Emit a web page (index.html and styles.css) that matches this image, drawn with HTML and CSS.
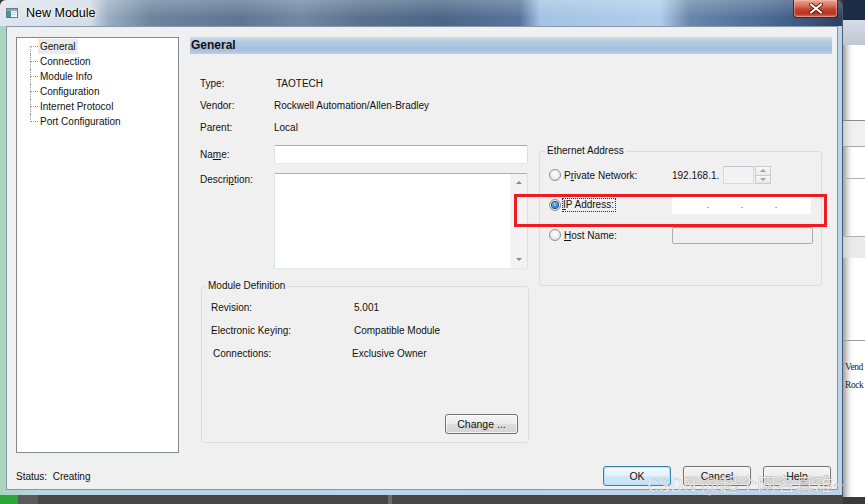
FILE: index.html
```html
<!DOCTYPE html>
<html>
<head>
<meta charset="utf-8">
<title>New Module</title>
<link rel="stylesheet" href="styles.css">
</head>
<body>
<div class="screen">
  <div class="main-col">
    <div class="window">
      <div class="titlebar">
        <svg class="app-icon" width="12" height="10" viewBox="0 0 12 10">
          <rect x="0.5" y="0.5" width="11" height="9" fill="#f4f6f8" stroke="#6d7c8c"/>
          <rect x="1" y="1" width="10" height="2" fill="#8aa4c0"/>
          <rect x="1" y="3" width="4" height="6" fill="#3e9a9a"/>
          <rect x="5.5" y="4" width="5" height="1" fill="#c8d2dc"/>
          <rect x="5.5" y="6" width="5" height="1" fill="#c8d2dc"/>
        </svg>
        <span class="title">New Module</span>
        <div class="close-btn">
          <svg width="14" height="11" viewBox="0 0 14 11">
            <path d="M2 1.5 L12 9.5 M12 1.5 L2 9.5" stroke="#5a1b14" stroke-width="4" stroke-linecap="round"/>
            <path d="M2 1.5 L12 9.5 M12 1.5 L2 9.5" stroke="#ffffff" stroke-width="2.2" stroke-linecap="round"/>
          </svg>
        </div>
      </div>
      <div class="frame-body">
        <div class="client">
          <div class="content-row">
            <div class="tree">
              <ul class="tree-list">
                <li class="ti first"><span class="twig"><span class="tw-top"></span><span class="tw-bot"></span></span><span class="ti-text sel">General</span></li>
                <li class="ti"><span class="twig"><span class="tw-top"></span><span class="tw-bot"></span></span><span class="ti-text">Connection</span></li>
                <li class="ti"><span class="twig"><span class="tw-top"></span><span class="tw-bot"></span></span><span class="ti-text">Module Info</span></li>
                <li class="ti"><span class="twig"><span class="tw-top"></span><span class="tw-bot"></span></span><span class="ti-text">Configuration</span></li>
                <li class="ti"><span class="twig"><span class="tw-top"></span><span class="tw-bot"></span></span><span class="ti-text">Internet Protocol</span></li>
                <li class="ti last"><span class="twig"><span class="tw-top"></span><span class="tw-bot"></span></span><span class="ti-text">Port Configuration</span></li>
              </ul>
            </div>
            <div class="panel">
              <div class="panel-header">General</div>
              <div class="panel-body">
                <div class="form-col">
                  <div class="info-row first-info"><span class="lbl">Type:</span><span class="val val-type">TAOTECH</span></div>
                  <div class="info-row"><span class="lbl">Vendor:</span><span class="val">Rockwell Automation/Allen-Bradley</span></div>
                  <div class="info-row"><span class="lbl">Parent:</span><span class="val">Local</span></div>
                  <div class="field-row name-row"><span class="lbl">Na<u>m</u>e:</span><div class="textbox name-box"></div></div>
                  <div class="field-row desc-row"><span class="lbl desc-lbl">Descri<u>p</u>tion:</span>
                    <div class="textbox desc-box">
                      <div class="desc-text"></div>
                      <div class="vscroll">
                        <span class="arrow-up"></span>
                        <span class="arrow-down"></span>
                      </div>
                    </div>
                  </div>
                  <fieldset class="group moddef">
                    <legend>Module Definition</legend>
                    <div class="moddef-inner">
                      <div class="md-row"><span class="md-lbl">Revision:</span><span class="md-val">5.001</span></div>
                      <div class="md-row"><span class="md-lbl">Electronic Keying:</span><span class="md-val">Compatible Module</span></div>
                      <div class="md-row md-conn"><span class="md-lbl">Connections:</span><span class="md-val">Exclusive Owner</span></div>
                      <button class="btn btn-change">Change ...</button>
                    </div>
                  </fieldset>
                </div>
                <div class="eth-col">
                  <fieldset class="group eth">
                    <legend>Ethernet Address</legend>
                    <div class="eth-inner">
                      <div class="eth-row">
                        <div class="eth-opt"><span class="radio"></span><span>P<u>r</u>ivate Network:</span></div>
                        <div class="eth-ctl">
                          <span class="ip-prefix">192.168.1.</span>
                          <span class="spin-box"></span>
                          <span class="spinner"><span class="sp-btn"><span class="tri-up"></span></span><span class="sp-btn"><span class="tri-down"></span></span></span>
                        </div>
                      </div>
                      <div class="eth-row">
                        <div class="eth-opt"><span class="radio checked"></span><span class="focus-rect"><u>I</u>P Address:</span></div>
                        <div class="eth-ctl">
                          <div class="ip-box">
                            <span class="ip-seg seg-first"></span><span class="ip-dot">.</span><span class="ip-seg"></span><span class="ip-dot">.</span><span class="ip-seg"></span><span class="ip-dot">.</span><span class="ip-seg seg-last"></span>
                          </div>
                        </div>
                      </div>
                      <div class="eth-row">
                        <div class="eth-opt"><span class="radio"></span><span><u>H</u>ost Name:</span></div>
                        <div class="eth-ctl"><div class="host-box"></div></div>
                      </div>
                    </div>
                  </fieldset>
                </div>
              </div>
            </div>
          </div>
          <div class="footer">
            <div class="status">Status:&nbsp; Creating</div>
            <div class="buttons">
              <button class="btn btn-default">OK</button>
              <button class="btn">Cancel</button>
              <button class="btn">Help</button>
            </div>
          </div>
        </div>
      </div>
    </div>
    <div class="desktop"></div>
  </div>
  <div class="bgapp">
    <div class="ba-dark"></div>
    <div class="ba-head"></div>
    <div class="ba-s1"></div>
    <div class="ba-s2"></div>
    <div class="ba-s3"></div>
    <div class="ba-s4"></div>
    <div class="ba-s5"></div>
    <div class="ba-s6"></div>
    <div class="ba-s7"><div class="ba-text">Vend</div><div class="ba-text">Rock</div></div>
    <div class="ba-bottom"></div>
  </div>
  <div class="red-box"></div>
  <div class="watermark">CSDN @起个网名真难~</div>
</div>
</body>
</html>
```

FILE: styles.css
```css
html, body {
  margin: 0;
  padding: 0;
  background: #3a3a3a;
}
body {
  font-family: "Liberation Sans", Arial, sans-serif;
  font-size: 10px;
  color: #111;
}
.screen {
  position: relative;
  width: 865px;
  height: 504px;
  overflow: hidden;
  display: flex;
}
.main-col {
  width: 843px;
  display: flex;
  flex-direction: column;
}
.window {
  height: 495px;
  display: flex;
  flex-direction: column;
  border-right: 1px solid #4d5b6e;
  border-radius: 6px 6px 0 0;
  overflow: hidden;
}

/* title bar */
.titlebar {
  height: 26px;
  flex: none;
  display: flex;
  align-items: flex-start;
  background:
    linear-gradient(180deg, rgba(255,255,255,0.22), rgba(255,255,255,0) 70%),
    linear-gradient(90deg, #dfe6ee 0px, #d3dde7 90px, #9aaec2 108px, #6e849e 150px, #5e7694 240px, #7088a2 300px, #5a728f 360px, #4c6586 440px, #58749a 520px, #a4c2e3 540px, #b0cdeb 660px, #6886a9 690px, #4e6d95 760px, #3e5a80 800px, #2b3f5e 842px);
}
.app-icon {
  margin: 8px 0 0 6px;
  flex: none;
}
.title {
  margin-left: 8px;
  line-height: 26px;
  font-size: 12.5px;
  color: #000;
  text-shadow: 0 0 6px rgba(255,255,255,0.95), 0 0 3px rgba(255,255,255,0.9);
}
.close-btn {
  margin-left: auto;
  margin-right: 4px;
  width: 45px;
  height: 18px;
  box-sizing: border-box;
  border: 1px solid #5b1d16;
  border-top: none;
  border-radius: 0 0 4px 4px;
  background: linear-gradient(180deg, #e9a895 0%, #d8705c 35%, #c4412b 55%, #b83620 80%, #d1705b 100%);
  box-shadow: inset 0 0 0 1px rgba(255,200,190,0.45);
  display: flex;
  align-items: center;
  justify-content: center;
}

/* frame */
.frame-body {
  flex: 1;
  display: flex;
  padding: 0 4px 5px 6px;
  background: linear-gradient(90deg, #a9d4c0 0px, #b8d6e6 40px, #bcd5ee 100%);
}
.client {
  flex: 1;
  display: flex;
  flex-direction: column;
  border: 1px solid #8797ab;
  background: #f0f0f0;
}
.content-row {
  display: flex;
  padding: 10px 5px 0 9px;
  height: 426px;
  box-sizing: border-box;
}

/* tree */
.tree {
  width: 163px;
  height: 416px;
  box-sizing: border-box;
  border: 1px solid #828790;
  background: #fff;
  flex: none;
}
.tree-list {
  list-style: none;
  margin: 0;
  padding: 1px 0 0 13px;
}
.ti {
  display: flex;
  height: 15px;
}
.twig {
  display: flex;
  flex-direction: column;
  width: 8px;
  flex: none;
}
.tw-top {
  height: 7px;
  border-left: 1px dotted #9c9c9c;
  border-bottom: 1px dotted #9c9c9c;
}
.tw-bot {
  flex: 1;
  border-left: 1px dotted #9c9c9c;
}
.first .tw-top { border-left-color: transparent; }
.last .tw-bot { border-left-color: transparent; }
.ti-text {
  line-height: 15px;
  padding: 0 2px;
  font-size: 10px;
  white-space: nowrap;
}
.ti-text.sel {
  background: #ebebeb;
}

/* panel */
.panel {
  margin-left: 11px;
  flex: 1;
  display: flex;
  flex-direction: column;
}
.panel-header {
  height: 17px;
  line-height: 17px;
  padding-left: 1px;
  font-size: 12px;
  font-weight: bold;
  color: #111;
  background: linear-gradient(180deg, #cddcec 0%, #b1c8e1 35%, #a6bfdb 75%, #bcd0e6 100%);
}
.panel-body {
  display: flex;
  flex: 1;
}
.form-col {
  width: 340px;
  padding-left: 10px;
  box-sizing: border-box;
  flex: none;
}
.info-row {
  display: flex;
  height: 22px;
  align-items: center;
}
.first-info { margin-top: 18px; }
.lbl {
  width: 74px;
  flex: none;
}
.val-type { padding-left: 2px; }
.field-row {
  display: flex;
}
.name-row {
  margin-top: 7px;
  align-items: center;
}
.desc-row {
  margin-top: 9px;
}
.desc-lbl {
  line-height: 14px;
}
.textbox {
  box-sizing: border-box;
  width: 254px;
  border: 1px solid;
  border-color: #abadb3 #dbdfe6 #e3e9ef #e2e3ea;
  border-radius: 2px;
  background: #fff;
}
.name-box { height: 19px; }
.desc-box {
  height: 96px;
  display: flex;
}
.desc-text { flex: 1; }
.vscroll {
  width: 16px;
  background: #f3f3f3;
  border-left: 1px solid #f7f7f7;
  display: flex;
  flex-direction: column;
  justify-content: space-between;
  align-items: center;
  padding: 7px 0 7px;
}
.arrow-up {
  width: 0; height: 0;
  border-left: 3px solid transparent;
  border-right: 3px solid transparent;
  border-bottom: 3px solid #8a8a8a;
}
.arrow-down {
  width: 0; height: 0;
  border-left: 3px solid transparent;
  border-right: 3px solid transparent;
  border-top: 3px solid #8a8a8a;
}

/* group boxes */
.group {
  margin: 0;
  padding: 0;
  border: 1px solid #d8dfe4;
  border-radius: 3px;
  min-width: 0;
  box-sizing: border-box;
}
.group legend {
  padding: 0 2px;
  line-height: 14px;
  font-size: 10px;
}
.moddef {
  margin: 10px 0 0 1px;
  width: 328px;
  height: 164px;
}
.moddef legend { margin-left: 4px; }
.moddef-inner {
  height: 149px;
  box-sizing: border-box;
  padding: 3px 10px 8px 9px;
  display: flex;
  flex-direction: column;
}
.md-row {
  display: flex;
  height: 23px;
  align-items: center;
}
.md-lbl {
  width: 143px;
  flex: none;
}
.md-conn .md-lbl { padding-left: 2px; width: 141px; }
.md-conn .md-val { margin-left: -2px; }
.btn-change {
  margin-top: auto;
  align-self: flex-end;
  width: 73px !important;
}

.eth-col {
  margin-left: 9px;
  width: 283px;
  flex: none;
}
.eth {
  margin-top: 90px;
  width: 283px;
  height: 142px;
}
.eth legend { margin-left: 5px; }
.eth-inner {
  padding: 2px 0 0 9px;
}
.eth-row {
  display: grid;
  grid-template-columns: 123px 1fr;
  height: 30px;
  align-items: center;
}
.eth-opt {
  display: flex;
  align-items: center;
  white-space: nowrap;
}
.radio {
  width: 12px;
  height: 12px;
  box-sizing: border-box;
  border-radius: 50%;
  border: 1px solid #8e9195;
  background: radial-gradient(circle at 50% 40%, #ffffff 0%, #ececec 55%, #cfcfcf 100%);
  margin-right: 3px;
  flex: none;
  display: flex;
  align-items: center;
  justify-content: center;
}
.radio.checked::after {
  content: "";
  width: 6px;
  height: 6px;
  border-radius: 50%;
  background: radial-gradient(circle at 45% 40%, #9fd8fb 0%, #3a8ad6 50%, #1b4f8e 100%);
  box-shadow: 0 0 0 1px #24507f;
}
.focus-rect {
  outline: 1px dotted #333;
  outline-offset: 0;
  padding: 0 1px 0 0;
  margin-left: -1px;
  line-height: 12px;
}
.eth-ctl {
  display: flex;
  align-items: center;
}
.ip-prefix {
  width: 51px;
  flex: none;
}
.spin-box {
  width: 31px;
  height: 18px;
  box-sizing: border-box;
  border: 1px solid #d5d8dc;
  border-top-color: #c2c5ca;
  background: #f3f3f3;
}
.spinner {
  margin-left: 1px;
  width: 16px;
  height: 18px;
  display: flex;
  flex-direction: column;
}
.sp-btn {
  flex: 1;
  box-sizing: border-box;
  border: 1px solid #c9cbce;
  background: linear-gradient(#f8f8f8, #e9e9e9);
  display: flex;
  align-items: center;
  justify-content: center;
}
.sp-btn + .sp-btn { border-top: none; }
.tri-up {
  border-left: 3px solid transparent;
  border-right: 3px solid transparent;
  border-bottom: 3px solid #a0a0a0;
}
.tri-down {
  border-left: 3px solid transparent;
  border-right: 3px solid transparent;
  border-top: 3px solid #a0a0a0;
}
.ip-box {
  width: 139px;
  height: 17px;
  background: #fff;
  display: flex;
  align-items: center;
  font-size: 9px;
  color: #555;
}
.ip-seg { width: 30px; flex: none; }
.ip-seg.seg-first { width: 34px; }
.ip-seg.seg-last { flex: 1; }
.ip-dot { width: 4px; text-align: center; }
.host-box {
  width: 141px;
  height: 17px;
  box-sizing: border-box;
  border: 1px solid #acacac;
  border-radius: 2px;
  background: #f0f0f0;
}

/* footer */
.footer {
  margin-top: 13px;
  height: 20px;
  display: flex;
  align-items: center;
  padding: 0 6px 0 9px;
}
.status {
  flex: 1;
  padding-top: 1px;
}
.buttons {
  display: flex;
  gap: 12px;
}
.btn {
  width: 68px;
  height: 20px;
  box-sizing: border-box;
  padding: 0;
  border: 1px solid #707070;
  border-radius: 3px;
  background: linear-gradient(180deg, #f4f4f4 0%, #ececec 50%, #dedede 52%, #d2d2d2 100%);
  box-shadow: inset 0 0 0 1px rgba(255,255,255,0.7);
  font-family: "Liberation Sans", Arial, sans-serif;
  font-size: 10.5px;
  color: #111;
}
.btn-default {
  border-color: #3c7fb1;
  background: linear-gradient(180deg, #f2f9fd 0%, #e3f1fb 50%, #d2e8f7 52%, #c4e0f4 100%);
  box-shadow: inset 0 0 0 1px rgba(180,225,250,0.9);
}

/* background app on right */
.desktop {
  flex: 1;
  background: linear-gradient(90deg, #2aa836 0px, #2aa836 18px, #5a5a5a 18px, #5a5a5a 38px, #474747 38px, #474747 388px, #6a6a6a 388px, #6a6a6a 392px, #474747 392px);
}
.bgapp {
  width: 22px;
  flex: none;
  display: flex;
  flex-direction: column;
  background: #fff;
  box-shadow: inset 7px 0 7px -4px rgba(0,0,0,0.45);
  font-family: "Liberation Serif", "Times New Roman", serif;
  font-size: 9.5px;
  letter-spacing: -0.4px;
  color: #222;
  white-space: nowrap;
  overflow: hidden;
}
.ba-dark { height: 20px; background: #1c2b46; flex: none; }
.ba-head { height: 25px; background: linear-gradient(180deg, #d6dce6, #bfc7d4); flex: none; }
.ba-s1 { height: 75px; border-bottom: 1px solid #8a8a8a; flex: none; }
.ba-s2 { height: 25px; background: rgba(230,230,230,0.6); border-bottom: 1px solid #a8a8a8; flex: none; }
.ba-s3 { height: 31px; border-bottom: 1px solid #b0b0b0; flex: none; }
.ba-s4 { height: 57px; border-bottom: 1px solid #b0b0b0; flex: none; }
.ba-s5 { height: 21px; background: rgba(225,225,225,0.7); flex: none; }
.ba-s6 { height: 82px; border-bottom: 1px solid #999; flex: none; }
.ba-s7 { padding: 17px 0 0 2px; flex: 1; }
.ba-text { line-height: 18px; }
.ba-bottom { height: 7px; background: #3a3a3a; flex: none; }

/* overlays */
.red-box {
  position: absolute;
  left: 514px;
  top: 194px;
  width: 313px;
  height: 33px;
  box-sizing: border-box;
  border: 3px solid #ee1c22;
}
.watermark {
  position: absolute;
  left: 647px;
  top: 473px;
  font-family: "Noto Sans CJK SC", "Liberation Sans", sans-serif;
  font-size: 19px;
  line-height: 22px;
  white-space: nowrap;
  color: rgba(255,255,255,0.85);
  -webkit-text-stroke: 0.5px rgba(150,150,150,0.65);
}
```
